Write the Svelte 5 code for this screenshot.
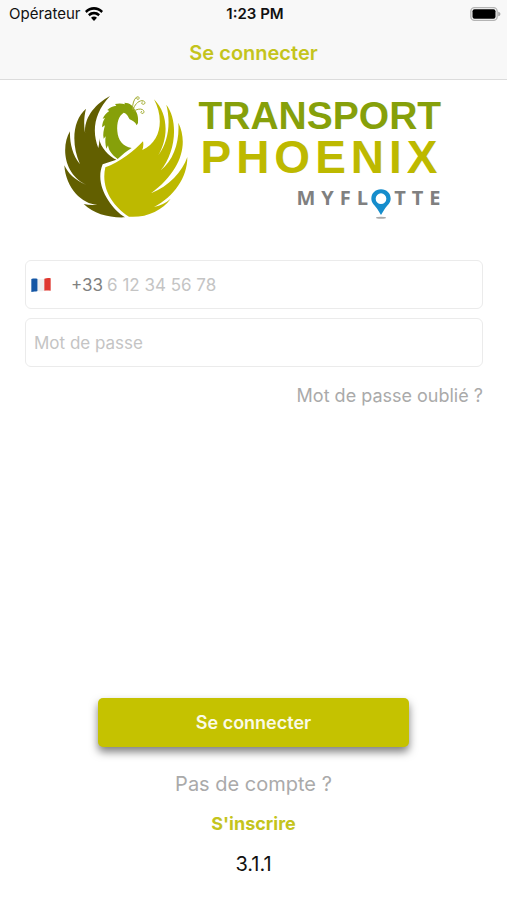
<script>
    let phone = $state("");
    let password = $state("");

    function login(e) {
        e.preventDefault();
    }
</script>

<div class="app">

    <header class="header">
        <div class="status">
            <div class="carrier">
                <span>Opérateur</span>
                <svg class="wifi" viewBox="0 0 54 42" aria-hidden="true">
                    <path d="M0 12C15-4 39-4 54 12l-5 6C37 5 17 5 5 18z" />
                    <path d="M9 22c10-10 26-10 36 0l-5 6c-8-7-18-7-26 0z" />
                    <path d="M18 32c5-5 13-5 18 0l-9 10z" />
                </svg>
            </div>
            <span class="time">1:23 PM</span>
            <svg class="battery" viewBox="0 0 92 42" aria-hidden="true">
                <rect x="2" y="2" width="79" height="38" rx="11" fill="#f8f8f8" stroke="#b4b4b4" stroke-width="4" />
                <rect x="7" y="7" width="69" height="28" rx="6" />
                <path d="M84 14c9 2 9 12 0 14z" fill="#a8a8a8" />
            </svg>
        </div>
        <h1 class="title">Se connecter</h1>
    </header>

    <main class="main">
        <div class="logo">
            <svg class="bird" viewBox="15 21 372 372" aria-hidden="true">
                <!-- left wing -->
                <path fill="#625f00" d="M153 24C112 46 78 84 78 128c0 24 8 42 18 56C76 150 70 105 81 62 42 95 35 165 63 229 40 200 32 165 33 130 8 170 10 255 81 290 45 275 27 255 16 232c4 68 54 118 99 118-14 2-27 1-41-2 31 30 76 42 124 40C155 360 105 290 131 229l41-14c-22-10-47-35-52-65 2 10 0 20-2 30C98 130 105 75 153 24z" />
                <!-- right wing -->
                <path fill="#bdb900" d="M139 238c41-13 91-53 113-78 2 9 1 18-2 26 58-26 65-96 35-152 45 46 43 116 13 168 32-42 37-102 24-152 38 50 27 145-17 197 40-32 57-87 53-143 32 66 7 146-82 212 54-21 94-66 109-109 0 63-40 118-100 150 20-5 35-12 50-25-25 36-75 58-125 54-51-33-85-88-71-148z" />
                <!-- neck and head -->
                <path fill="#86a00a" d="M176 213C158 200 149 187 147 172L142 182C139 168 138 158 140 145L134 152C131 138 134 126 138 112L129 118C130 106 133 97 138 90L131 92C136 82 142 75 151 69L145 66C153 58 162 54 172 53L168 48C180 45 190 46 198 49L196 44C212 44 224 54 228 66C237 78 238 90 237 105L233 112C229 102 220 98 212 94C208 88 206 78 194 74C179 84 173 104 175 130C177 158 192 176 218 180C202 190 190 200 176 213Z" />
                <g fill="none" stroke="#a2ac30" stroke-width="3" stroke-linecap="round">
                    <path d="M220 63c1-15 4-29 13-36 7-3 10 4 5 7-4 1-6-2-4-4" />
                    <path d="M222 65c5-14 14-26 27-27 10 0 12 10 4 11-5 0-7-5-3-7" />
                    <path d="M225 69c8-5 18-8 26-4 7 5 4 13-3 11-3-2-3-5 0-6" />
                </g>
            </svg>
            <div class="brand">
                <span class="transport">TRANSPORT</span>
                <span class="phoenix">PHOENIX</span>
                <div class="myflotte">
                    <span>MYFL</span>
                    <svg class="pin" viewBox="0 0 60 90" role="img" aria-label="O">
                        <ellipse cx="30" cy="86" rx="15" ry="3" fill="#aaa" />
                        <path fill="#168dcc" fill-rule="evenodd" d="M30 1C13 1 1 13 1 29c0 13 11 20 18 31l11 18 11-18c7-11 18-18 18-31C59 13 47 1 30 1zm0 12a16 16 0 1 1 0 32 16 16 0 0 1 0-32z" />
                    </svg>
                    <span>TTE</span>
                </div>
            </div>
        </div>

        <form class="form" id="login" onsubmit={login}>
            <label class="field">
                <svg class="flag" viewBox="0 0 60 42" aria-label="France">
                    <path fill="#1557a5" d="M1 3c7-2 13-2 19 0v36c-6 2-12 2-19 3z" />
                    <path fill="#eee" d="M20 3c7 2 13 1 20-1v36c-7 2-13 2-20 1z" />
                    <path fill="#df3830" d="M40 2c7-2 13-2 19-1v37c-7-1-13-1-19 0z" />
                </svg>
                <span class="prefix">+33</span>
                <input type="tel" placeholder="6 12 34 56 78" aria-label="Téléphone" bind:value={phone} />
            </label>
            <label class="field">
                <input type="password" placeholder="Mot de passe" aria-label="Mot de passe" bind:value={password} />
            </label>
            <a class="forgot" href="#oubli">Mot de passe oublié ?</a>
        </form>

        <div class="bottom">
            <button class="submit" type="submit" form="login">Se connecter</button>
            <p class="question">Pas de compte ?</p>
            <a class="signup" href="#inscription">S'inscrire</a>
            <p class="version">3.1.1</p>
        </div>
    </main>

</div>

<style>
:global(body) {
    background: white;
}

.app {
    min-height: 100vh;
    display: flex;
    flex-direction: column;
    font-family: Inter, sans-serif;
    color: #111;
}

.header {
    background: #f8f8f8;
    border-bottom: 1px solid #dcdcdc;
}

.status {
    display: grid;
    grid-template-columns: 1fr auto 1fr;
    align-items: center;
    height: 27px;
    padding: 0 6px 0 9px;
    font-size: 15px;
}

.carrier {
    display: flex;
    align-items: center;
    gap: 4px;
}

.wifi {
    width: 18px;
    height: 14px;
}

.time {
    font-weight: 600;
}

.battery {
    width: 31px;
    height: 14px;
    justify-self: end;
}

.title {
    margin: 0;
    font-size: 20px;
    font-weight: 600;
    line-height: 52px;
    text-align: center;
    color: #c4c41c;
}

.main {
    flex: 1;
    display: flex;
    flex-direction: column;
}

/* LOGO */
.logo {
    display: flex;
    justify-content: center;
    gap: 10px;
    padding-top: 15px;
}

.bird {
    width: 124px;
    height: 124px;
}

.brand {
    display: flex;
    flex-direction: column;
    font-family: "Liberation Sans", Arial, sans-serif;
    font-weight: 700;
}

.transport {
    font-size: 39px;
    line-height: 42px;
    color: #86a00a;
}

.phoenix {
    padding-left: 2px;
    font-size: 46px;
    line-height: 40px;
    letter-spacing: 5px;
    color: #bdb900;
}

.myflotte {
    display: flex;
    justify-content: flex-end;
    align-items: flex-end;
    height: 42px;
    margin-right: -4px;
    font-family: "Open Sans", sans-serif;
    font-size: 20px;
    line-height: 42px;
    letter-spacing: 6px;
    color: #808080;
}

.pin {
    width: 20px;
    height: 30px;
    margin-left: -3px;
    margin-right: 3px;
}

/* FORM */
.form {
    display: flex;
    flex-direction: column;
    gap: 9px;
    padding: 41px 24px 0 25px;
}

.field {
    display: flex;
    align-items: center;
    height: 47px;
    padding: 0 8px;
    border: 1px solid #ebebeb;
    border-radius: 6px;
    font-size: 17px;
}

.flag {
    width: 20px;
    height: 14px;
    margin-left: -3px;
    margin-right: 20px;
}

.prefix {
    margin-right: 4px;
    color: #808080;
}

input {
    flex: 1;
    min-width: 0;
    padding: 0;
    border: none;
    outline: none;
    background: transparent;
    font: inherit;
    color: #333;
}

input::placeholder {
    color: #c4c4c4;
}

.forgot {
    align-self: flex-end;
    margin-top: 8px;
    font-size: 18px;
    line-height: 24px;
    color: #aaa;
    text-decoration: none;
}

/* BOTTOM */
.bottom {
    display: flex;
    flex-direction: column;
    align-items: center;
    gap: 16px;
    margin-top: auto;
    padding: 0 98px 24px;
}

.submit {
    width: 100%;
    height: 49px;
    margin-bottom: 9px;
    border: none;
    border-radius: 5px;
    background: #c5c200;
    box-shadow: 0 5px 9px rgba(0, 0, 0, 0.5);
    font: 600 18px Inter, sans-serif;
    color: #fafae6;
    cursor: pointer;
}

.question {
    margin: 0;
    font-size: 20px;
    line-height: 24px;
    color: #aaa;
}

.signup {
    font-size: 18px;
    font-weight: 700;
    line-height: 24px;
    color: #c4c41c;
    text-decoration: none;
}

.version {
    margin: 0;
    font-size: 20px;
    line-height: 24px;
}
</style>
